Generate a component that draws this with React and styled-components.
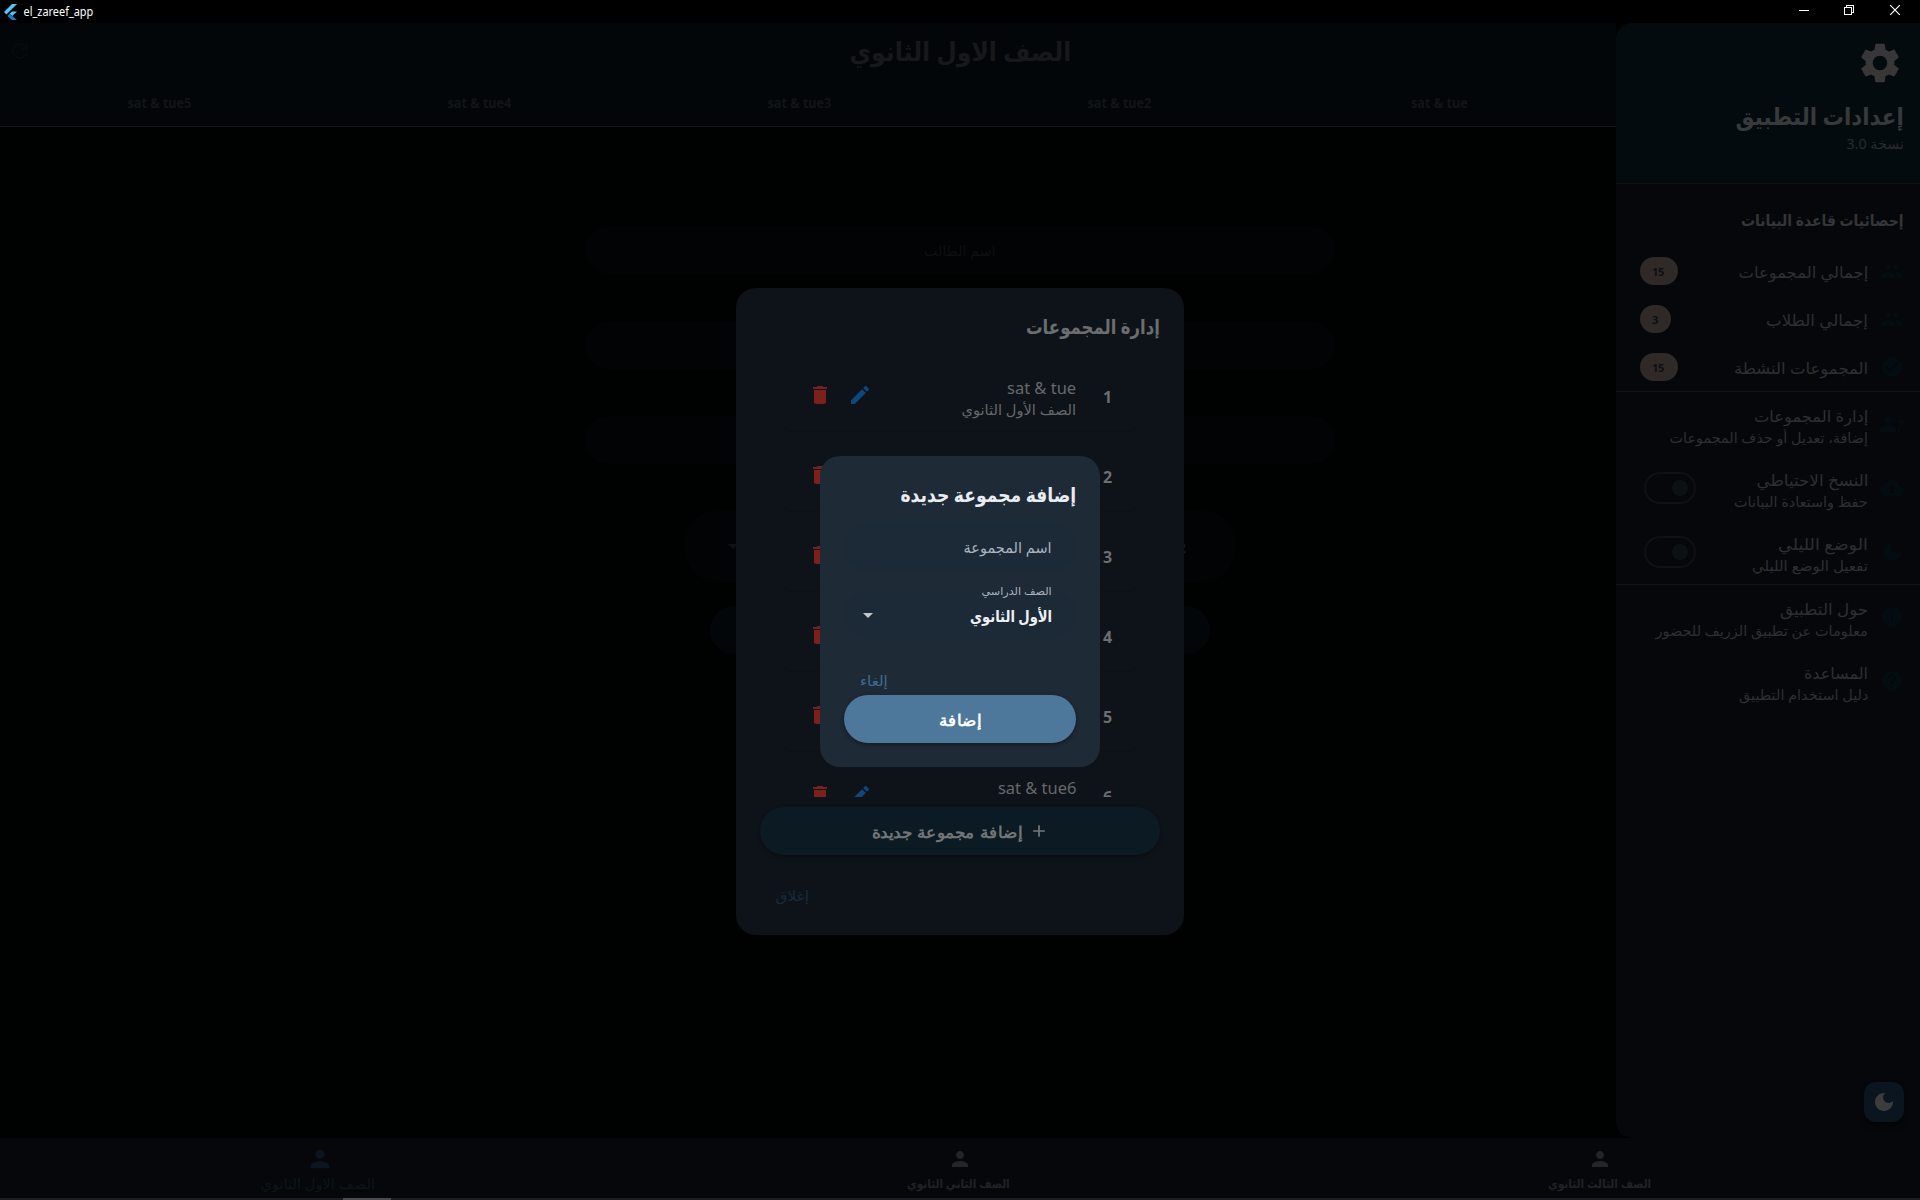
import React, { useLayoutEffect, useRef, useState } from "react";
import styled, { createGlobalStyle } from "styled-components";

const Global = createGlobalStyle`
  * { box-sizing: border-box; }
  html, body { margin: 0; background: #000; }
  body {
    width: 1920px; height: 1200px; overflow: hidden;
    font-family: "Noto Sans", "Open Sans", "DejaVu Sans", sans-serif;
  }
`;

/* ---------- text ---------- */
const Slot = styled.span`
  display: inline-flex; flex: none; align-items: center; justify-content: center;
  width: ${(p) => p.$w}px; height: ${(p) => p.$h || 20}px;
`;
const Run = styled.span`
  flex: none; white-space: nowrap; line-height: 1;
  direction: ${(p) => (p.$ltr ? "ltr" : "rtl")};
  font-size: ${(p) => p.$size}px; font-weight: ${(p) => p.$weight || 400};
  color: ${(p) => p.$color};
`;
function Label({ children, w, h, size, weight, color, ltr }) {
  const ref = useRef(null);
  const [k, setK] = useState(1);
  useLayoutEffect(() => {
    setK(w / ref.current.offsetWidth);
  }, [w, size, weight, children]);
  return (
    <Slot $w={w} $h={h}>
      <Run ref={ref} $size={size} $weight={weight} $color={color} $ltr={ltr} style={{ transform: `scaleX(${k})` }}>
        {children}
      </Run>
    </Slot>
  );
}

/* ---------- icons ---------- */
const Svg = styled.svg`
  display: block; flex: none; fill: ${(p) => p.$color};
  width: ${(p) => p.$size}px; height: ${(p) => p.$size}px;
`;
const PATHS = {
  refresh: "M17.65 6.35C16.2 4.9 14.21 4 12 4c-4.42 0-7.99 3.58-7.99 8s3.57 8 7.99 8c3.73 0 6.84-2.55 7.73-6h-2.08c-.82 2.33-3.04 4-5.65 4-3.31 0-6-2.69-6-6s2.69-6 6-6c1.66 0 3.14.69 4.22 1.78L13 11h7V4l-2.35 2.35z",
  settings: "M19.14 12.94c.04-.3.06-.61.06-.94 0-.32-.02-.64-.07-.94l2.03-1.58c.18-.14.23-.41.12-.61l-1.92-3.32c-.12-.22-.37-.29-.59-.22l-2.39.96c-.5-.38-1.03-.7-1.62-.94l-.36-2.54c-.04-.24-.24-.41-.48-.41h-3.84c-.24 0-.43.17-.47.41l-.36 2.54c-.59.24-1.13.57-1.62.94l-2.39-.96c-.22-.08-.47 0-.59.22L2.74 8.87c-.12.21-.08.47.12.61l2.03 1.58c-.05.3-.09.63-.09.94s.02.64.07.94l-2.03 1.58c-.18.14-.23.41-.12.61l1.92 3.32c.12.22.37.29.59.22l2.39-.96c.5.38 1.03.7 1.62.94l.36 2.54c.05.24.24.41.48.41h3.84c.24 0 .44-.17.47-.41l.36-2.54c.59-.24 1.13-.56 1.62-.94l2.39.96c.22.08.47 0 .59-.22l1.92-3.32c.12-.22.07-.47-.12-.61l-2.01-1.58zM12 15.6c-1.98 0-3.6-1.62-3.6-3.6s1.62-3.6 3.6-3.6 3.6 1.62 3.6 3.6-1.62 3.6-3.6 3.6z",
  group: "M16 11c1.66 0 2.99-1.34 2.99-3S17.66 5 16 5c-1.66 0-3 1.34-3 3s1.34 3 3 3zm-8 0c1.66 0 2.99-1.34 2.99-3S9.66 5 8 5C6.34 5 5 6.34 5 8s1.34 3 3 3zm0 2c-2.33 0-7 1.17-7 3.5V19h14v-2.5c0-2.33-4.67-3.5-7-3.5zm8 0c-.29 0-.62.02-.97.05 1.16.84 1.97 1.97 1.97 3.45V19h6v-2.5c0-2.33-4.67-3.5-7-3.5z",
  check: "M12 2C6.48 2 2 6.48 2 12s4.48 10 10 10 10-4.48 10-10S17.52 2 12 2zm-2 15l-5-5 1.41-1.41L10 14.17l7.59-7.59L19 8l-9 9z",
  groupAdd: "M22 9V7h-2v2h-2v2h2v2h2v-2h2V9zM8 12c2.21 0 4-1.79 4-4s-1.79-4-4-4-4 1.79-4 4 1.79 4 4 4zm0 1c-2.67 0-8 1.34-8 4v3h16v-3c0-2.66-5.33-4-8-4zm4.51-8.95C13.43 5.11 14 6.49 14 8s-.57 2.89-1.49 3.95C14.47 11.7 16 10.04 16 8s-1.53-3.7-3.49-3.95zm4.02 9.78C17.42 14.66 18 15.7 18 17v3h2v-3c0-1.45-1.59-2.51-3.47-3.17z",
  backup: "M19.35 10.04C18.67 6.59 15.64 4 12 4 9.11 4 6.6 5.64 5.35 8.04 2.34 8.36 0 10.91 0 14c0 3.31 2.69 6 6 6h13c2.76 0 5-2.24 5-5 0-2.64-2.05-4.78-4.65-4.96zM14 13v4h-4v-4H7l5-5 5 5h-3z",
  moon: "M12 3c-4.97 0-9 4.03-9 9s4.03 9 9 9 9-4.03 9-9c0-.46-.04-.92-.1-1.36-.98 1.37-2.58 2.26-4.4 2.26-2.98 0-5.4-2.42-5.4-5.4 0-1.81.89-3.42 2.26-4.4-.44-.06-.9-.1-1.36-.1z",
  info: "M12 2C6.48 2 2 6.48 2 12s4.48 10 10 10 10-4.48 10-10S17.52 2 12 2zm1 15h-2v-6h2v6zm0-8h-2V7h2v2z",
  help: "M12 2C6.48 2 2 6.48 2 12s4.48 10 10 10 10-4.48 10-10S17.52 2 12 2zm1 17h-2v-2h2v2zm2.07-7.75l-.9.92C13.45 12.9 13 13.5 13 15h-2v-.5c0-1.1.45-2.1 1.17-2.83l1.24-1.26c.37-.36.59-.86.59-1.41 0-1.1-.9-2-2-2s-2 .9-2 2H8c0-2.21 1.79-4 4-4s4 1.79 4 4c0 .88-.36 1.68-.93 2.25z",
  person: "M12 12c2.21 0 4-1.79 4-4s-1.79-4-4-4-4 1.79-4 4 1.79 4 4 4zm0 2c-2.67 0-8 1.34-8 4v2h16v-2c0-2.66-5.33-4-8-4z",
  edit: "M3 17.25V21h3.75L17.81 9.94l-3.75-3.75L3 17.25zM20.71 7.04c.39-.39.39-1.02 0-1.41l-2.34-2.34c-.39-.39-1.02-.39-1.41 0l-1.83 1.83 3.75 3.75 1.83-1.83z",
  trash: "M6 19c0 1.1.9 2 2 2h8c1.1 0 2-.9 2-2V7H6v12zM19 4h-3.5l-1-1h-5l-1 1H5v2h14V4z",
  add: "M19 13h-6v6h-2v-6H5v-2h6V5h2v6h6v2z",
  down: "M7 10l5 5 5-5z",
};
const Icon = ({ name, color, size = 24 }) => (
  <Svg viewBox="0 0 24 24" $color={color} $size={size}>
    <path d={PATHS[name]} />
  </Svg>
);

/* ---------- window ---------- */
const Window = styled.div`
  position: relative; width: 1920px; height: 1200px; overflow: hidden;
  display: flex; flex-direction: column; background: #000201;
`;
const TitleBar = styled.div`
  height: 23px; flex: none; background: #000; display: flex; align-items: center;
  justify-content: space-between; padding-left: 3px;
`;
const Brand = styled.div`display: flex; align-items: center; gap: 5px; padding-top: 1px;`;
const WinButtons = styled.div`
  display: flex; height: 23px; padding-right: 2px;
  svg { width: 46px; height: 20px; fill: none; stroke: #fff; shape-rendering: crispEdges; }
  svg:last-child { shape-rendering: auto; stroke-width: 1.2; }
`;
const Body = styled.div`flex: 1; min-height: 0; display: flex; align-items: stretch;`;
const Page = styled.div`width: 1616px; overflow: hidden; flex: none; display: flex; flex-direction: column;`;
const Header = styled.header`
  height: 104px; flex: none; width: 1920px; background: #030609; border-bottom: 1px solid #171717;
`;
const HeadRow = styled.div`
  height: 56px; display: grid; grid-template-columns: 40px 1fr 40px;
  align-items: center; justify-items: center;
`;
const Tabs = styled.div`display: flex; direction: rtl; height: 48px;`;
const Tab = styled.div`width: 320px; display: flex; align-items: center; justify-content: center; padding-right: 1px;`;
const Form = styled.div`
  width: 1920px; padding-top: 99px; display: flex; flex-direction: column; align-items: center;
`;
const Field = styled.div`
  width: ${(p) => p.$w}px; height: ${(p) => p.$h}px; margin-bottom: ${(p) => p.$mb}px;
  border-radius: ${(p) => p.$r}px; background: ${(p) => p.$bg};
  display: flex; align-items: center; justify-content: ${(p) => p.$justify || "center"};
  padding: 0 ${(p) => p.$pr || 0}px 0 ${(p) => p.$pl || 0}px;
`;
const FieldValue = styled.span`display: flex; padding-top: 2px;`;

/* ---------- drawer ---------- */
const Drawer = styled.aside`
  width: 304px; flex: none; direction: rtl; background: #06070b; height: 1115px;
  border-radius: 16px 0 0 16px; overflow: hidden; display: flex; flex-direction: column;
`;
const DrawerHead = styled.div`
  height: 161px; flex: none; background: #040b0e; border-bottom: 1px solid #0b1114;
  padding: 16px 16px 0; display: flex; flex-direction: column; align-items: flex-start;
`;
const HeadTitle = styled.div`height: 32px; margin-top: 13px; display: flex; align-items: center;`;
const HeadSub = styled.div`height: 20px; margin-top: 2px; display: flex; align-items: center;`;
const Section = styled.div`height: 63px; flex: none; padding: 25px 16px 0;`;
const Tile = styled.div`
  height: ${(p) => p.$h}px; flex: none; padding: 0 16px 0 24px;
  display: flex; align-items: center; gap: 12px;
`;
const TileText = styled.div`
  flex: 1; display: flex; flex-direction: column; align-items: flex-start; gap: 2px;
  padding-top: ${(p) => p.$pt}px;
`;
const Rule = styled.div`height: 1px; flex: none; background: #101216;`;
const Chip = styled.div`
  height: 28px; width: ${(p) => p.$w}px; border-radius: 14px; background: #2f2a27; padding: 1px 1px 0 0;
  display: flex; align-items: center; justify-content: center;
`;
const Switch = styled.div`
  width: 52px; height: 32px; margin-left: 4px; border: 2px solid #0e1013; border-radius: 16px;
  display: flex; align-items: center; padding-right: 6px;
  &::before { content: ""; width: 16px; height: 16px; border-radius: 50%; background: #0d1114; }
`;
const Fab = styled.button`
  position: absolute; left: 1864px; top: 1082px; width: 40px; height: 40px; border: 0; padding: 0;
  border-radius: 12px; background: #0b151f; box-shadow: 0 4px 6px rgba(0, 0, 0, 0.4);
  display: flex; align-items: center; justify-content: center;
`;

/* ---------- bottom bar ---------- */
const BottomNav = styled.nav`height: 60px; flex: none; display: flex; background: #06070b;`;
const NavItem = styled.div`
  width: 640px; display: flex; flex-direction: column; align-items: center;
  padding-top: ${(p) => p.$pt}px; gap: ${(p) => p.$gap}px;
`;
const NavText = styled.div`display: flex; padding-right: ${(p) => p.$pr}px;`;
const Edge = styled.div`
  height: 2px; flex: none; background: #1c1c1d; padding-left: 343px;
  &::before { content: ""; display: block; width: 48px; height: 2px; background: #4b4b4b; }
`;

/* ---------- dialogs ---------- */
const Overlay = styled.div`position: absolute; left: ${(p) => p.$x}px; top: ${(p) => p.$y}px;`;
const Dialog = styled.section`
  direction: rtl; width: ${(p) => p.$w}px; height: ${(p) => p.$h}px; border-radius: 20px;
  background: ${(p) => p.$bg}; padding: 22px 24px 24px; display: flex; flex-direction: column;
`;
const DialogTitle = styled.div`height: 34px; flex: none; padding-top: 1px;`;
const List = styled.div`
  height: 437px; margin-top: 16px; flex: none; overflow: hidden; padding: 0 20px;
`;
const Card = styled.div`
  height: 72px; margin-bottom: 8px; border-radius: 12px; border-bottom: 1px solid #0c1117;
  display: flex; align-items: center; padding: 0 12px 0 20px;
`;
const Num = styled.div`width: 40px; display: flex; justify-content: center; padding: 2px 1px 0 0;`;
const CardText = styled.div`
  flex: 1; padding: 6px 12px 0 0; display: flex; flex-direction: column; align-items: flex-start; gap: 2px;
`;
const IconButton = styled.span`
  width: 40px; height: 40px; display: flex; align-items: center; justify-content: center; padding-bottom: 2px;
`;
const Pill = styled.button`
  height: 48px; width: 100%; flex: none; border: 0; border-radius: 24px; background: ${(p) => p.$bg};
  display: flex; align-items: center; justify-content: center; gap: 7px; margin-top: ${(p) => p.$mt}px;
  box-shadow: 0 2px 4px rgba(0, 0, 0, ${(p) => p.$shadow}); padding: 0;
`;
const PillText = styled.span`display: flex; padding-top: 3px;`;
const TextLink = styled.div`
  display: flex; justify-content: flex-end; padding-left: 16px; margin-top: ${(p) => p.$mt}px; height: 20px; flex: none;
`;
const Input = styled.div`
  height: 48px; flex: none; border-radius: 24px; background: #1c2a38; padding: 0 24px 0 12px;
  display: flex; align-items: center; justify-content: space-between; margin-top: ${(p) => p.$mt}px;
`;
const Stack = styled.div`
  display: flex; flex-direction: column; align-items: flex-start; margin-top: -20px; gap: 9px;
`;

const STATS = [
  ["group", "إجمالي المجموعات", 130, "15", 38],
  ["group", "إجمالي الطلاب", 102, "3", 31],
  ["check", "المجموعات النشطة", 134, "15", 38],
];
const ACTIONS = [
  ["groupAdd", "إدارة المجموعات", 114, "إضافة، تعديل أو حذف المجموعات", 198],
  ["backup", "النسخ الاحتياطي", 112, "حفظ واستعادة البيانات", 134, true],
  ["moon", "الوضع الليلي", 90, "تفعيل الوضع الليلي", 116, true],
  null,
  ["info", "حول التطبيق", 88, "معلومات عن تطبيق الزريف للحضور", 212],
  ["help", "المساعدة", 64, "دليل استخدام التطبيق", 129],
];
const TABS = [["sat & tue6", 64], ["sat & tue", 57], ["sat & tue2", 64], ["sat & tue3", 64], ["sat & tue4", 64], ["sat & tue5", 64]];
const GROUPS = [["sat & tue", 69], ["sat & tue2", 78], ["sat & tue3", 78], ["sat & tue4", 78], ["sat & tue5", 78], ["sat & tue6", 78]];

export default function App() {
  return (
    <Window>
      <Global />
      <TitleBar>
        <Brand>
          <svg width="15" height="17" viewBox="0 0 15 17">
            <path fill="#54c5f8" d="M9 0h5L3.4 10.6 1 8z" />
            <path fill="#54c5f8" d="M9 7.4h5L9.3 12 6.7 9.7z" />
            <path fill="#1f7fc4" d="M6.7 9.7l2.6 2.3L13.8 16H9l-4.6-4.1z" />
          </svg>
          <Label w={70} size={12} color="#fff" ltr>el_zareef_app</Label>
        </Brand>
        <WinButtons>
          <svg viewBox="0 0 46 20"><path d="M19 10.5h10" /></svg>
          <svg viewBox="0 0 46 20"><path d="M18.5 7.5h7v7h-7zM20.5 7V5.5h7v7H26" /></svg>
          <svg viewBox="0 0 46 20"><path d="M18.2 5.2l9.6 9.6M27.8 5.2l-9.6 9.6" /></svg>
        </WinButtons>
      </TitleBar>

      <Body>
        <Page>
          <Header>
            <HeadRow>
              <Icon name="refresh" color="#070a0c" />
              <Label w={222} h={34} size={26} weight={700} color="#171819">الصف الاول الثانوي</Label>
            </HeadRow>
            <Tabs>
              {TABS.map(([t, w]) => (
                <Tab key={t}><Label w={w} size={14} weight={700} color="#121416" ltr>{t}</Label></Tab>
              ))}
            </Tabs>
          </Header>
          <Form>
            <Field $w={750} $h={48} $mb={47} $r={24} $bg="#020305">
              <Label w={72} size={15} color="#0e0f10">اسم الطالب</Label>
            </Field>
            <Field $w={750} $h={48} $mb={47} $r={24} $bg="#020305" />
            <Field $w={750} $h={48} $mb={47} $r={24} $bg="#020305" />
            <Field $w={550} $h={70} $mb={25} $r={30} $bg="#020305" $justify="space-between" $pl={36} $pr={49}>
              <Icon name="down" color="#101112" />
              <FieldValue><Label w={76} h={16} size={15} weight={700} color="#1a1b1c" ltr>sat &amp; tue2</Label></FieldValue>
            </Field>
            <Field $w={500} $h={48} $mb={0} $r={24} $bg="#020608" />
          </Form>
        </Page>

        <Drawer>
          <DrawerHead>
            <Icon name="settings" color="#373737" size={48} />
            <HeadTitle><Label w={168} h={32} size={24} weight={700} color="#373a3b">إعدادات التطبيق</Label></HeadTitle>
            <HeadSub><Label w={57} size={14} color="#282c2e">نسخة 3.0</Label></HeadSub>
          </DrawerHead>
          <Section><Label w={163} size={16} weight={700} color="#343538">إحصائيات قاعدة البيانات</Label></Section>
          {STATS.map(([icon, t, w, n, cw]) => (
            <Tile key={t} $h={48}>
              <Icon name={icon} color="#030c10" />
              <TileText $pt={1}><Label w={w} size={16} color="#2e2f32">{t}</Label></TileText>
              <Chip $w={cw}><Label w={n.length * 6.2} size={11} weight={700} color="#0c1013" ltr>{n}</Label></Chip>
            </Tile>
          ))}
          <Rule />
          {ACTIONS.map((a, i) =>
            a ? (
              <Tile key={i} $h={64}>
                <Icon name={a[0]} color="#030c10" />
                <TileText $pt={5}>
                  <Label w={a[2]} size={16} color="#2e2f32">{a[1]}</Label>
                  <Label w={a[4]} size={14} color="#2e2f32">{a[3]}</Label>
                </TileText>
                {a[5] && <Switch />}
              </Tile>
            ) : (
              <Rule key={i} />
            )
          )}
        </Drawer>
      </Body>

      <BottomNav>
        <NavItem $pt={7} $gap={1}>
          <Icon name="person" color="#0a151f" size={28} />
          <NavText $pr={4}><Label w={115} size={14} color="#0b151e">الصف الاول الثانوي</Label></NavText>
        </NavItem>
        <NavItem $pt={9} $gap={4}>
          <Icon name="person" color="#242528" />
          <NavText $pr={4}><Label w={103} h={18} size={12} weight={600} color="#212225">الصف الثاني الثانوي</Label></NavText>
        </NavItem>
        <NavItem $pt={9} $gap={4}>
          <Icon name="person" color="#242528" />
          <NavText $pr={0}><Label w={103} h={18} size={12} weight={600} color="#212225">الصف الثالث الثانوي</Label></NavText>
        </NavItem>
      </BottomNav>
      <Edge />

      <Fab><Icon name="moon" color="#3c3c3c" /></Fab>

      <Overlay $x={736} $y={288}>
        <Dialog $w={448} $h={647} $bg="#0e1319">
          <DialogTitle><Label w={134} h={32} size={20} weight={700} color="#6b6d6f">إدارة المجموعات</Label></DialogTitle>
          <List>
            {GROUPS.map(([t, w], i) => (
              <Card key={t}>
                <Num><Label w={9} size={16} weight={700} color="#6c6e70" ltr>{i + 1}</Label></Num>
                <CardText>
                  <Label w={w} size={16} color="#65686b" ltr>{t}</Label>
                  <Label w={115} size={14} color="#65686b">الصف الأول الثانوي</Label>
                </CardText>
                <IconButton><Icon name="edit" color="#10477a" /></IconButton>
                <IconButton><Icon name="trash" color="#7a211b" /></IconButton>
              </Card>
            ))}
          </List>
          <Pill $bg="#0b1a23" $mt={10} $shadow={0.3}>
            <Icon name="add" color="#76797b" size={20} />
            <PillText><Label w={150} size={16} weight={700} color="#727577">إضافة مجموعة جديدة</Label></PillText>
          </Pill>
          <TextLink $mt={31}><Label w={33} size={14} weight={500} color="#172a3c">إغلاق</Label></TextLink>
        </Dialog>
      </Overlay>

      <Overlay $x={820} $y={456}>
        <Dialog $w={280} $h={311} $bg="#1f2a37">
          <DialogTitle><Label w={176} h={32} size={20} weight={700} color="#e9edf1">إضافة مجموعة جديدة</Label></DialogTitle>
          <Input $mt={11}><Label w={88} size={15} color="#a9b4bf">اسم المجموعة</Label></Input>
          <Input $mt={20}>
            <Stack>
              <Label w={70} h={12} size={11} color="#a9b4bf">الصف الدراسي</Label>
              <Label w={82} size={16} weight={700} color="#eef1f4">الأول الثانوي</Label>
            </Stack>
            <Icon name="down" color="#c3c6ca" />
          </Input>
          <TextLink $mt={32}><Label w={28} size={14} weight={500} color="#406c94">إلغاء</Label></TextLink>
          <Pill $bg="#4d779b" $mt={4} $shadow={0.35}>
            <PillText><Label w={42} size={16} weight={700} color="#fff">إضافة</Label></PillText>
          </Pill>
        </Dialog>
      </Overlay>
    </Window>
  );
}
